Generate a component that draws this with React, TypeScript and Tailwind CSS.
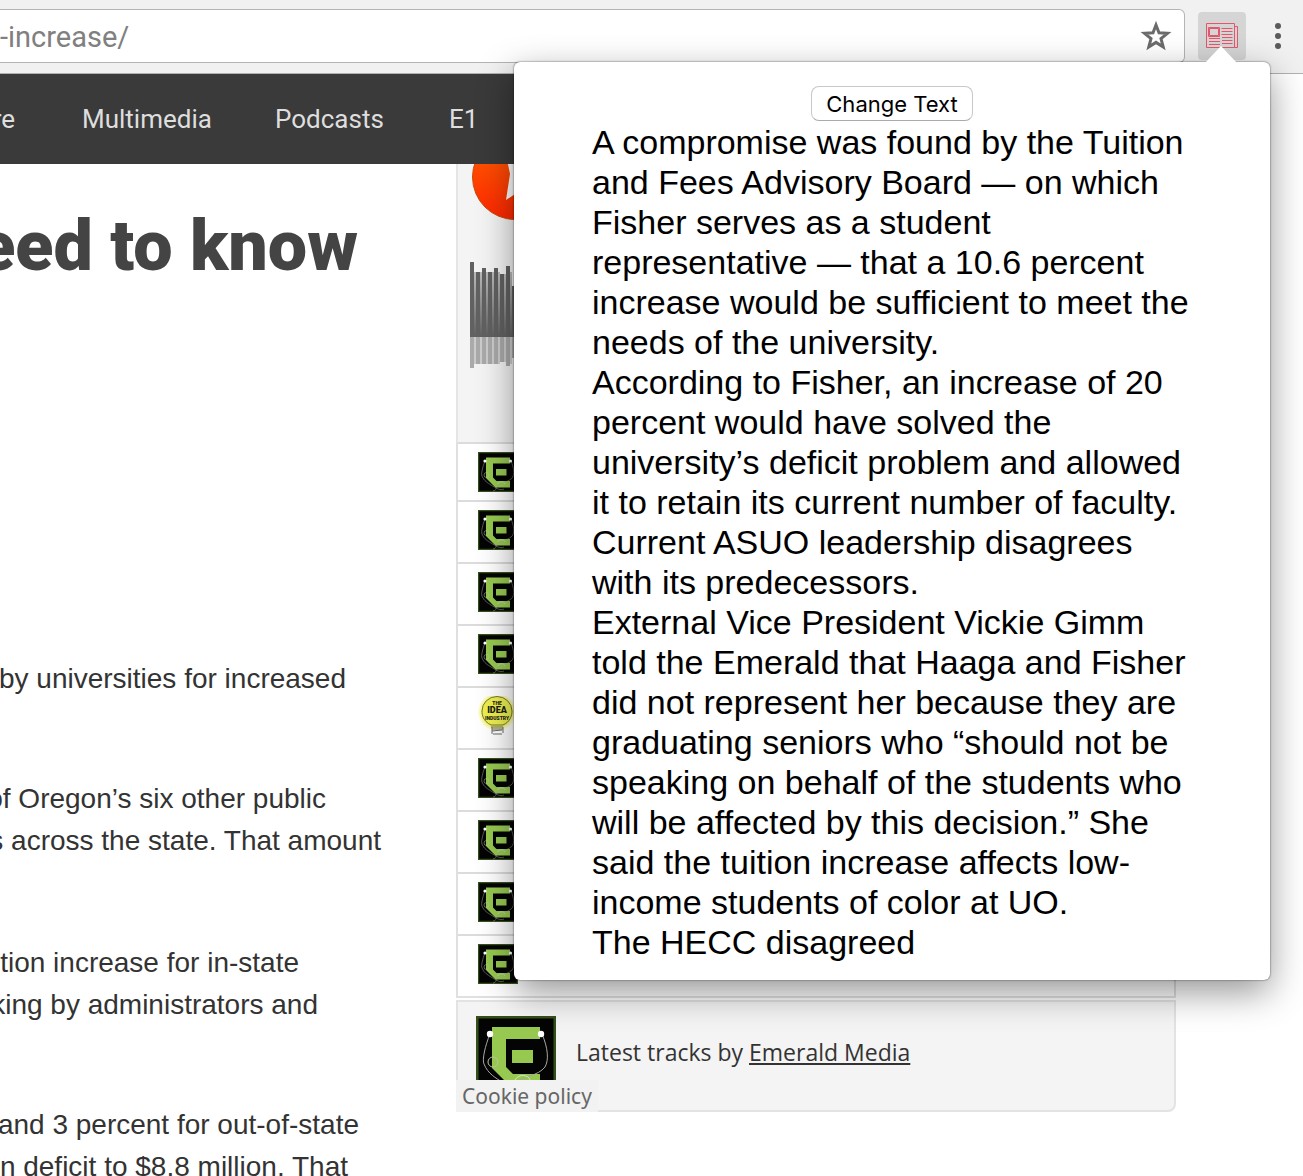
import React from "react";

const popupLines = [
  ["A compromise was found by the Tuition", "and Fees Advisory Board — on which", "Fisher serves as a student", "representative — that a 10.6 percent", "increase would be sufficient to meet the", "needs of the university."],
  ["According to Fisher, an increase of 20", "percent would have solved the", "university’s deficit problem and allowed", "it to retain its current number of faculty.", "Current ASUO leadership disagrees", "with its predecessors."],
  ["External Vice President Vickie Gimm", "told the Emerald that Haaga and Fisher", "did not represent her because they are", "graduating seniors who “should not be", "speaking on behalf of the students who", "will be affected by this decision.” She", "said the tuition increase affects low-", "income students of color at UO."],
  ["The HECC disagreed"],
];

const bars = [
  [75, 31], [65, 27], [69, 27], [65, 27], [69, 27], [63, 25], [71, 29], [51, 21], [60, 24], [66, 28], [58, 22],
];

function EmeraldArt({ className }: { className: string }) {
  return (
    <svg viewBox="0 0 80 80" className={className} role="img" aria-label="Emerald Media">
      <rect width="80" height="80" fill="#34501a" />
      <rect x="2.5" y="2.5" width="75" height="75" fill="#040404" />
      <path d="M16 11H64V23H30V51L37 58H64V71H35L16 52Z" fill="#97c950" />
      <path d="M36 34H57V47H36Z" fill="#97c950" />
      <path d="M14 18C9 30 6 44 8 48C12 58 20 62 26 66C36 72 44 78 52 74M66 18C72 32 73 44 69 51C62 60 48 60 41 66C34 72 38 77 30 78" fill="none" stroke="#a5a9a0" strokeWidth="1" />
      <circle cx="17" cy="46" r="5" fill="none" stroke="#b7c69c" strokeWidth="1" />
      <path d="M39 64C43 57 53 59 54 64" fill="none" stroke="#d5e8b8" strokeWidth="1" />
      <circle cx="14" cy="18" r="3.2" fill="#fff" />
      <circle cx="65" cy="18" r="3.2" fill="#fff" />
    </svg>
  );
}

function IdeaArt({ className }: { className: string }) {
  return (
    <svg viewBox="0 0 40 40" className={className} role="img" aria-label="The Idea Industry">
      <defs>
        <radialGradient id="glow">
          <stop offset="0.7" stopColor="#eff04f" />
          <stop offset="1" stopColor="#ffffe8" />
        </radialGradient>
      </defs>
      <circle cx="19" cy="16" r="19" fill="url(#glow)" />
      <path d="M13 29C5 25 4 19 4 15A15 14.5 0 0 1 34 15C34 20 32 26 25 29Z" fill="#edf051" stroke="#77752c" strokeWidth="1" />
      <path d="M13 31H25M14 33H25M14 35L24 34M15 38H24M14 31V38M25 31V37" stroke="#6b6b6b" strokeWidth="1" fill="none" />
      <g fontFamily="Roboto, sans-serif" fontWeight="900" textAnchor="middle" fill="#1b1b10">
        <text x="19" y="9" fontSize="5">THE</text>
        <text x="19" y="17" fontSize="9">IDEA</text>
        <text x="19" y="24" fontSize="5">INDUSTRY</text>
      </g>
    </svg>
  );
}

function Line({ className, children }: { className: string; children: React.ReactNode }) {
  return <span className={`flex justify-end whitespace-nowrap ${className}`}>{children}</span>;
}

function BrowserBar() {
  return (
    <header className="flex h-[74px] shrink-0 items-start border-b border-[#b1b1b1] bg-[#f1f1f1] pt-[9px]">
      <div className="flex h-[54px] min-w-0 flex-1 items-center rounded-r-md border border-l-0 border-[#b4b4b4] bg-white pr-3">
        <input
          aria-label="Address"
          defaultValue="-increase/"
          className="min-w-0 flex-1 bg-transparent pt-1 font-[Roboto,sans-serif] text-[29px] text-[#808080] outline-none"
        />
        <button aria-label="Bookmark this page">
          <svg viewBox="0 0 32 32" className="size-8" fill="none" stroke="#6b6b6b" strokeWidth="3">
            <path d="M16 5L19 12.8L27.5 13.3L21 18.6L23.2 27L16 22.4L8.8 27L11 18.6L4.5 13.3L13 12.8Z" />
          </svg>
        </button>
      </div>
      <button aria-label="News extension" className="mt-[3px] ml-[13px] flex size-12 items-center justify-center rounded bg-[#d5d5d5]">
        <svg viewBox="0 0 32 26" className="h-[26px] w-8" fill="none" stroke="#e6566b">
          <path d="M.5 .5H28.5V24.5H.5ZM28.5 3.5H31.5V24.5H28.5M2.5 4.5H13.5V13.5H2.5ZM3.5 5.5H12.5V12.5H3.5Z" />
          <path d="M15.500 5.500H26.500M15.500 8.500H26.500M15.500 11.500H26.500M3 15.500H14M16 14.500H26.500M3 18.500H14M16 17.500H26.500M3 21.500H14M16 20.500H26.500" />
        </svg>
      </button>
      <button aria-label="Browser menu" className="mt-3.5 mr-[22px] ml-[29px] flex flex-col gap-1">
        <span className="size-1.5 rounded-full bg-[#5b5b5b]" />
        <span className="size-1.5 rounded-full bg-[#5b5b5b]" />
        <span className="size-1.5 rounded-full bg-[#5b5b5b]" />
      </button>
    </header>
  );
}

function Player() {
  return (
    <div className="h-[278px] overflow-hidden border-l-2 border-[#e5e5e5] bg-[#f4f4f4] pl-3">
      <button aria-label="Play" className="-mt-[30px] ml-0.5 block size-[86px]">
        <svg viewBox="0 0 86 86" className="size-full">
          <defs>
            <linearGradient id="play" x1="0" y1="0" x2="0" y2="1">
              <stop offset="0.3" stopColor="#ff5000" />
              <stop offset="1" stopColor="#ff2600" />
            </linearGradient>
          </defs>
          <circle cx="43" cy="43" r="42.500" fill="url(#play)" stroke="#c64b0c" />
          <path d="M33 16L38 40L34 66L70 42Z" fill="#fff" />
        </svg>
      </button>
      <svg viewBox="0 0 66 108" className="mt-[42px] h-[108px] w-[66px]" shapeRendering="crispEdges" role="img" aria-label="Waveform">
        <defs>
          <linearGradient id="gap" x1="0" y1="0" x2="0" y2="1">
            <stop offset="0" stopColor="#bbb" />
            <stop offset="1" stopColor="#606060" />
          </linearGradient>
        </defs>
        {bars.map(([up, down], i) => (
          <g key={i}>
            <rect x={i * 6 + 4} y={75 - Math.min(up, 65)} width="2" height={Math.min(up, 65)} fill="url(#gap)" />
            <rect x={i * 6 + 4} y="75" width="2" height={Math.min(down, 27)} fill="#ccc" />
            <rect x={i * 6} y={75 - up} width="4" height={up} fill="#616161" />
            <rect x={i * 6} y="75" width="4" height={down} fill="#aaa" />
          </g>
        ))}
      </svg>
    </div>
  );
}

function Tracks() {
  return (
    <aside className="w-[720px] shrink-0 font-['Noto_Sans',sans-serif]">
      <Player />
      <ul className="border-x-2 border-b-2 border-[#e0e0e0] bg-white">
        {[0, 1, 2, 3, 4, 5, 6, 7, 8].map((i) => (
          <li key={i} className="h-[62px] border-t-2 border-[#dcdcdc] pt-2 pl-5 first:h-[58px]">
            {i === 4 ? <IdeaArt className="size-10" /> : <EmeraldArt className="size-10" />}
          </li>
        ))}
      </ul>
      <footer className="relative mt-0.5 flex h-[112px] items-start rounded-b-lg border-2 border-[#e3e3e3] bg-[#f4f4f4] pt-3.5 pl-[18px] text-[#333]">
        <EmeraldArt className="size-20" />
        <p className="mt-5 ml-5 font-['Open_Sans',sans-serif] text-[23px] leading-8">
          Latest tracks by <a href="#emerald" className="underline underline-offset-2">Emerald Media</a>
        </p>
        <a href="#cookies" className="absolute -bottom-0.5 -left-0.5 bg-[#f2f2f2] px-1.5 text-[21px] leading-8 text-[#666]">
          Cookie policy
        </a>
      </footer>
    </aside>
  );
}

function Popup() {
  return (
    <section
      aria-label="Extension popup"
      className="absolute top-[62px] right-[33px] left-[514px] h-[918px] rounded-md bg-white shadow-[0_0_2px_rgba(0,0,0,0.7),0_12px_36px_rgba(0,0,0,0.42)]"
    >
      <svg viewBox="0 0 32 17" className="absolute -top-4 right-[33px] h-[17px] w-8">
        <path d="M0 17L16 0L32 17Z" fill="#fff" />
      </svg>
      <div className="flex h-full flex-col items-center pt-6">
        <button className="h-[35px] shrink-0 rounded-lg border border-[#c8c8c8] border-b-[#aaa] bg-white px-3.5 font-[Inter,sans-serif] text-[22px] leading-8 text-black">
          Change Text
        </button>
        <div className="mt-px w-full pl-[78px] font-['Liberation_Sans',sans-serif] text-[34px] leading-10 whitespace-nowrap text-black">
          {popupLines.map((lines, i) => (
            <p key={i}>
              {lines.map((line) => (
                <span key={line} className="block">{line}</span>
              ))}
            </p>
          ))}
        </div>
      </div>
    </section>
  );
}

export default function App() {
  return (
    <div className="relative flex h-screen flex-col overflow-hidden bg-white">
      <BrowserBar />
      <nav className="mr-20 flex h-[90px] shrink-0 items-center bg-[#3a3a3a] font-[Roboto,sans-serif] text-[26px] text-[#dedede]">
        <a href="#more"><Line className="w-[15px]">re</Line></a>
        <a href="#multimedia" className="ml-[67px] w-[126px]">Multimedia</a>
        <a href="#podcasts" className="ml-[67px] w-[107px]">Podcasts</a>
        <a href="#e1" className="ml-[67px]">E1</a>
      </nav>
      <main className="flex min-h-0 flex-1 overflow-hidden">
        <article className="w-[456px] shrink-0 font-['Liberation_Sans',sans-serif] text-[28px] leading-[42px] text-[#333]">
          <h1 className="mt-[42px] font-[Roboto,sans-serif] text-[70px] leading-[80px] font-black text-[#444]">
            <Line className="w-[358px]">eed to know</Line>
          </h1>
          <p className="mt-[372px]"><Line className="w-[346px]">by universities for increased</Line></p>
          <p className="mt-[78px]">
            <Line className="w-[326px]">of Oregon’s six other public</Line>
            <Line className="w-[381px]">s across the state. That amount</Line>
          </p>
          <p className="mt-20">
            <Line className="w-[299px]">tion increase for in-state</Line>
            <Line className="w-[318px]">king by administrators and</Line>
          </p>
          <p className="mt-[78px]">
            <Line className="w-[359px]">and 3 percent for out-of-state</Line>
            <Line className="w-[348px]">n deficit to $8.8 million. That</Line>
          </p>
        </article>
        <Tracks />
      </main>
      <Popup />
    </div>
  );
}
